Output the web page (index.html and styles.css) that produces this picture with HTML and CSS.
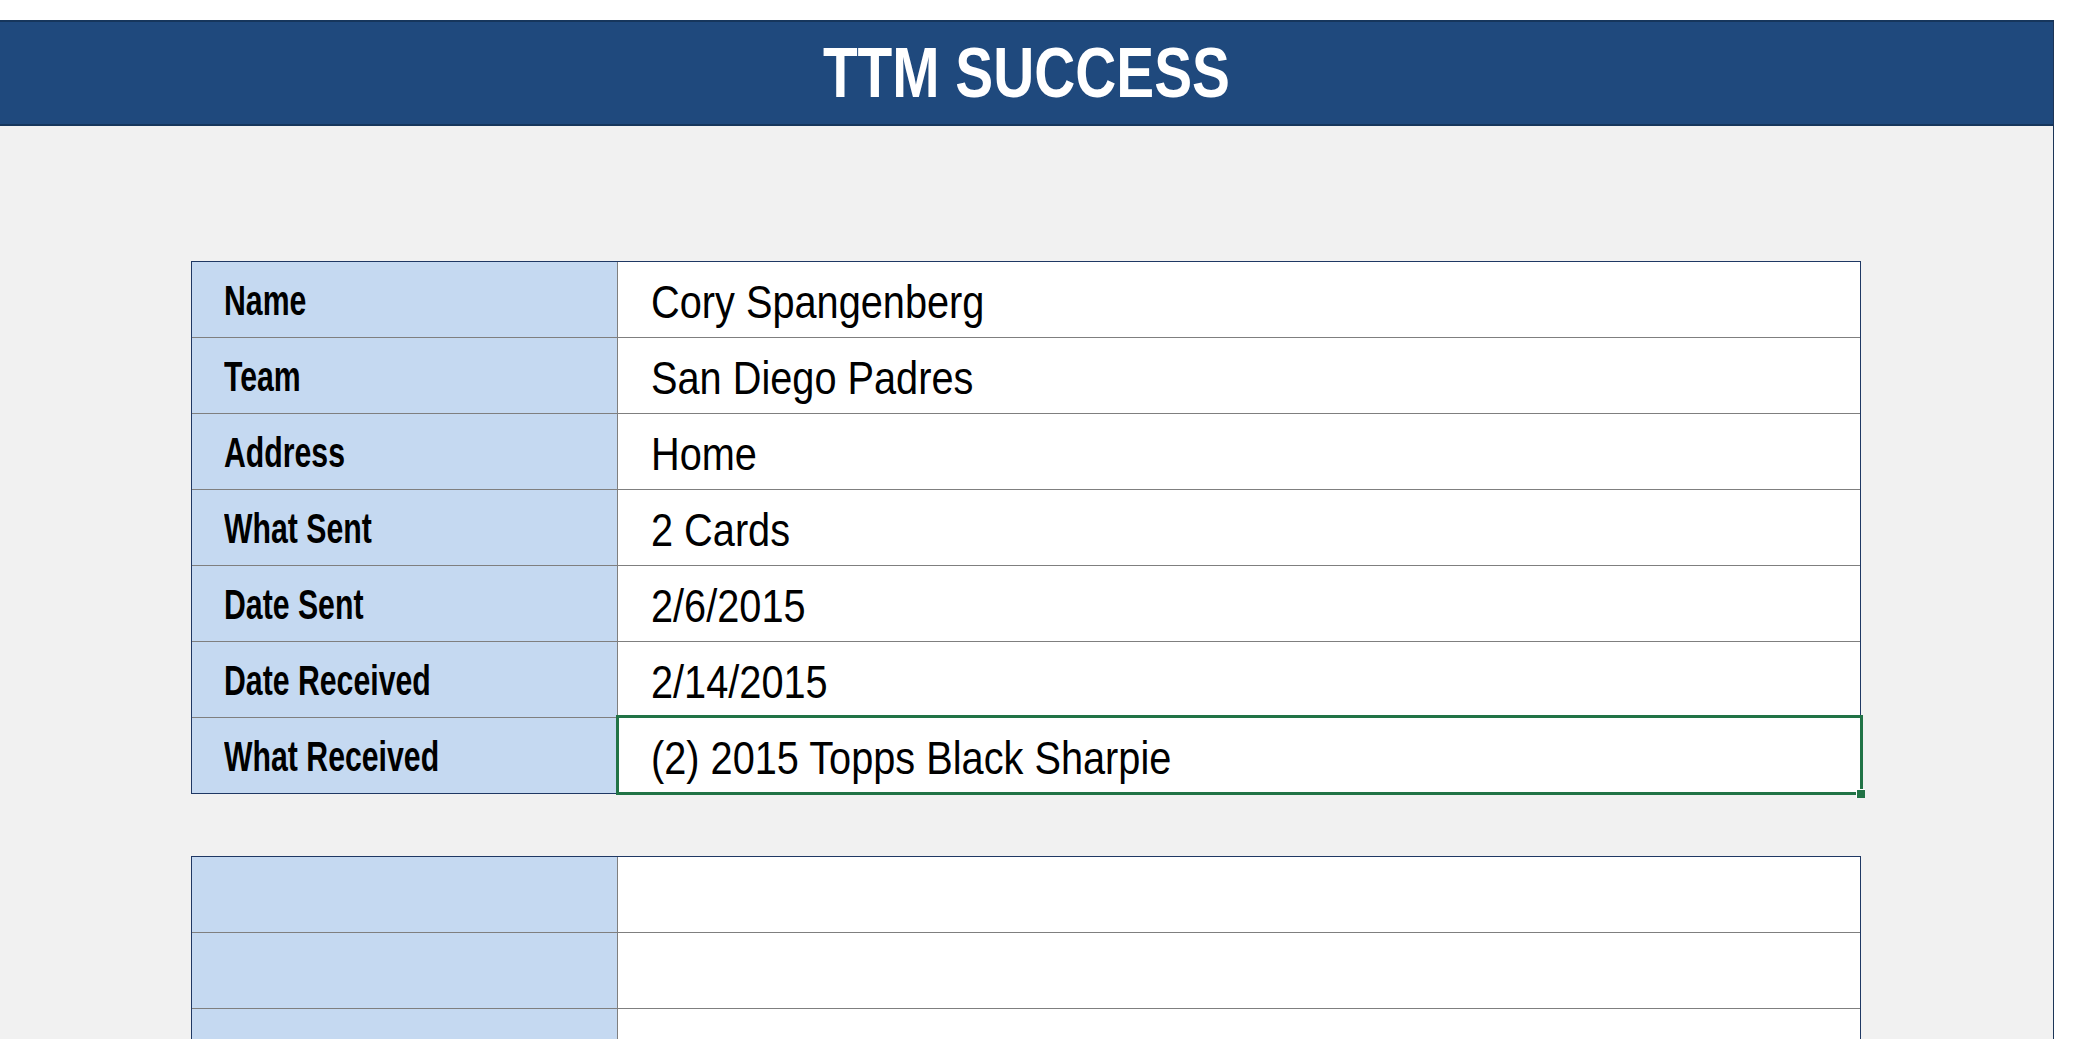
FILE: index.html
```html
<!DOCTYPE html>
<html lang="en">
<head>
    <meta charset="UTF-8">
    <meta name="viewport" content="width=device-width, initial-scale=1.0">
    <title>TTM Success</title>
    <link rel="stylesheet" href="styles.css">
</head>
<body>
    <div class="sheet">
        <div class="banner">
            <h1 class="banner-title">TTM SUCCESS</h1>
        </div>

        <div class="record">
            <div class="record-row">
                <div class="label-cell"><span class="label-text">Name</span></div>
                <div class="value-cell"><span class="value-text">Cory Spangenberg</span></div>
            </div>
            <div class="record-row">
                <div class="label-cell"><span class="label-text">Team</span></div>
                <div class="value-cell"><span class="value-text">San Diego Padres</span></div>
            </div>
            <div class="record-row">
                <div class="label-cell"><span class="label-text">Address</span></div>
                <div class="value-cell"><span class="value-text">Home</span></div>
            </div>
            <div class="record-row">
                <div class="label-cell"><span class="label-text">What Sent</span></div>
                <div class="value-cell"><span class="value-text">2 Cards</span></div>
            </div>
            <div class="record-row">
                <div class="label-cell"><span class="label-text">Date Sent</span></div>
                <div class="value-cell"><span class="value-text">2/6/2015</span></div>
            </div>
            <div class="record-row">
                <div class="label-cell"><span class="label-text">Date Received</span></div>
                <div class="value-cell"><span class="value-text">2/14/2015</span></div>
            </div>
            <div class="record-row">
                <div class="label-cell"><span class="label-text">What Received</span></div>
                <div class="value-cell selected">
                    <span class="value-text">(2) 2015 Topps Black Sharpie</span>
                    <span class="fill-handle"></span>
                </div>
            </div>
        </div>

        <div class="record record-next">
            <div class="record-row">
                <div class="label-cell"></div>
                <div class="value-cell"></div>
            </div>
            <div class="record-row">
                <div class="label-cell"></div>
                <div class="value-cell"></div>
            </div>
            <div class="record-row">
                <div class="label-cell"></div>
                <div class="value-cell"></div>
            </div>
        </div>
    </div>
</body>
</html>
```

FILE: styles.css
```css
html, body {
    margin: 0;
    height: 100%;
    overflow: hidden;
    background-color: #fff;
    font-family: "Liberation Sans", Arial, sans-serif;
}
.sheet {
    margin-top: 20px;
    width: 2053px;
    min-height: 1100px;
    background-color: #f1f1f1;
    border-right: 1px solid #1c3557;
}
.banner {
    height: 102px;
    background-color: #1f497d;
    border-top: 2px solid #16365c;
    border-bottom: 2px solid #16365c;
    text-align: center;
}
.banner-title {
    margin: 0;
    display: inline-block;
    font-size: 71px;
    line-height: 102px;
    font-weight: bold;
    color: #fff;
    transform: scaleX(0.8);
}
.record {
    margin: 135px 0 0 191px;
    width: 1668px;
    border: 1px solid #1f3864;
}
.record-next {
    margin-top: 62px;
}
.record-row {
    display: grid;
    grid-template-columns: 426px 1fr;
    height: 75px;
    border-top: 1px solid #7f7f7f;
}
.record-row:first-child {
    border-top: none;
}
.label-cell {
    display: flex;
    align-items: center;
    padding: 3px 0 0 32px;
    background-color: #c5d9f1;
    border-right: 1px solid #7f7f7f;
}
.value-cell {
    display: flex;
    align-items: center;
    padding: 3px 0 0 33px;
    background-color: #fff;
}
.label-text {
    display: inline-block;
    font-size: 42px;
    font-weight: bold;
    color: #000;
    white-space: nowrap;
    transform: scaleX(0.72);
    transform-origin: left center;
}
.value-text {
    display: inline-block;
    font-size: 47px;
    color: #000;
    white-space: nowrap;
    transform: scaleX(0.845);
    transform-origin: left center;
}
.selected {
    position: relative;
}
.selected::after {
    content: "";
    position: absolute;
    top: -3px;
    left: -2px;
    right: -3px;
    bottom: -2px;
    border: 3px solid #217346;
    pointer-events: none;
}
.fill-handle {
    position: absolute;
    right: -5px;
    bottom: -5px;
    width: 8px;
    height: 8px;
    background-color: #217346;
    border-top: 1px solid #fff;
    border-left: 1px solid #fff;
    z-index: 1;
}
```
